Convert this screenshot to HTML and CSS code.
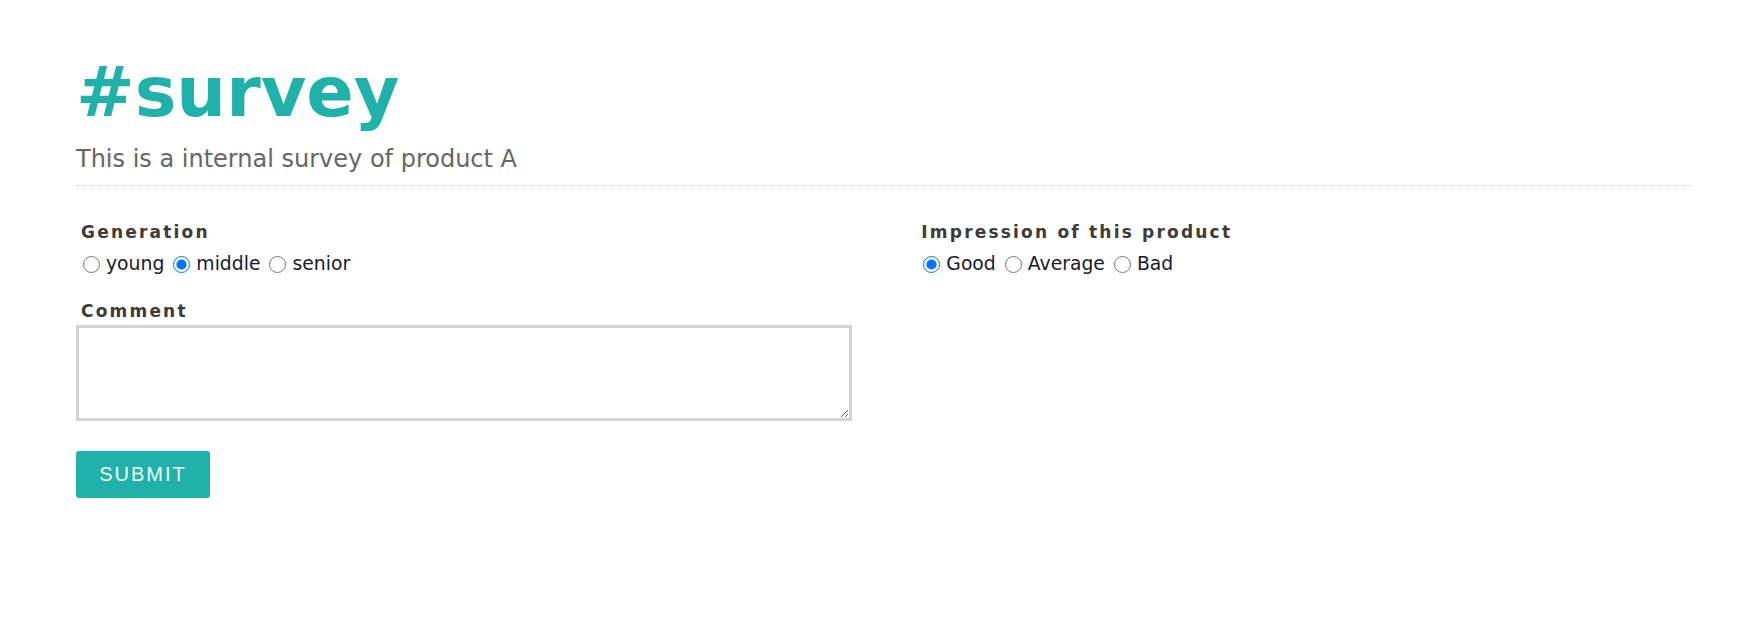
FILE: index.html
```html
<!DOCTYPE html>
<html lang="en">
<head>
<meta charset="utf-8">
<title>#survey</title>
<link rel="stylesheet" href="styles.css">
</head>
<body>
<div class="page">
  <header class="head">
    <h1 class="title">#survey</h1>
    <p class="subtitle">This is a internal survey of product A</p>
  </header>
  <form class="form">
    <div class="col">
      <div class="field">
        <div class="label">Generation</div>
        <div class="options">
          <label class="opt"><input type="radio" name="gen" value="young"> young</label>
          <label class="opt"><input type="radio" name="gen" value="middle" checked> middle</label>
          <label class="opt"><input type="radio" name="gen" value="senior"> senior</label>
        </div>
      </div>
      <div class="field field-comment">
        <label class="label" for="comment">Comment</label>
        <textarea id="comment" class="comment"></textarea>
      </div>
      <button type="button" class="submit">SUBMIT</button>
    </div>
    <div class="col">
      <div class="field">
        <div class="label">Impression of this product</div>
        <div class="options">
          <label class="opt"><input type="radio" name="imp" value="good" checked> Good</label>
          <label class="opt"><input type="radio" name="imp" value="average"> Average</label>
          <label class="opt"><input type="radio" name="imp" value="bad"> Bad</label>
        </div>
      </div>
    </div>
  </form>
</div>
</body>
</html>
```
FILE: styles.css
```css
html, body {
  margin: 0;
  padding: 0;
  background: #fff;
}
body {
  font-family: "DejaVu Sans", Verdana, sans-serif;
  color: #222;
}
.page {
  margin: 0 63px 0 76px;
  padding-top: 50px;
}
.head {
  border-bottom: 1px dotted #c8c8c8;
  padding-bottom: 12px;
}
.title {
  margin: 0;
  font-size: 70px;
  line-height: 84px;
  font-weight: bold;
  color: #20b2aa;
}
.subtitle {
  margin: 11px 0 0;
  font-size: 24px;
  line-height: 28px;
  color: #666;
}
.form {
  display: grid;
  grid-template-columns: 48% 48%;
  justify-content: space-between;
  margin-top: 36px;
}
.field {
  display: flex;
  flex-direction: column;
}
.label {
  display: block;
  padding-left: 5px;
  font-size: 17px;
  line-height: 20px;
  font-weight: bold;
  letter-spacing: 2.2px;
  color: #3d3a38;
}
.options {
  display: flex;
  align-items: center;
  margin-top: 10px;
  padding-left: 7px;
  font-size: 18.8px;
  line-height: 24px;
  color: #1a1a2e;
}
.opt {
  display: inline-flex;
  align-items: center;
  margin-right: 9px;
}
.opt input {
  width: 17px;
  height: 17px;
  margin: 0 6px 0 0;
}
.field-comment {
  margin-top: 25px;
}
.comment {
  box-sizing: border-box;
  width: 100%;
  height: 96px;
  margin-top: 4px;
  border: 3px solid #d3d3d3;
  padding: 4px;
  font-family: inherit;
  font-size: 16px;
  resize: vertical;
}
.comment:focus {
  outline: none;
}
.submit {
  display: block;
  margin-top: 30px;
  width: 134px;
  height: 47px;
  border: 0;
  border-radius: 3px;
  background: #20b2aa;
  color: #f4fbfa;
  font-family: "Liberation Sans", Arial, sans-serif;
  font-size: 20px;
  letter-spacing: 2px;
  cursor: pointer;
}
```
